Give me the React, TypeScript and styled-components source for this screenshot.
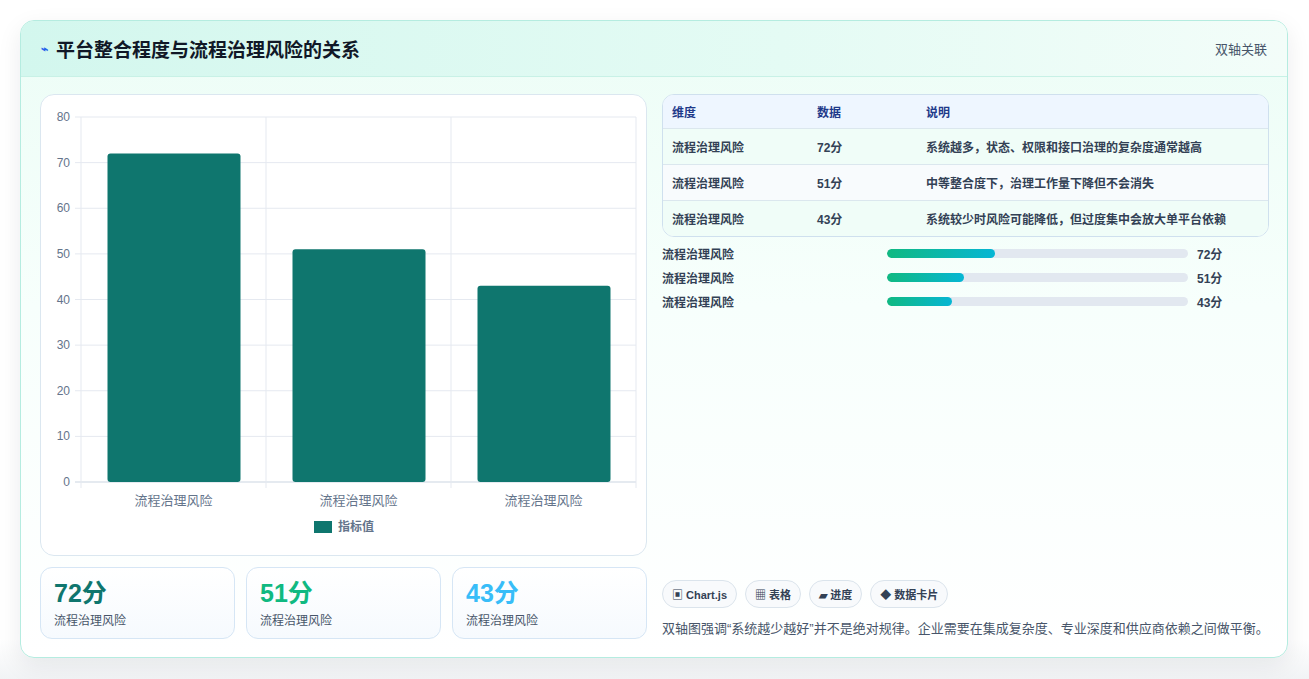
import React from 'react';
import styled, { createGlobalStyle } from 'styled-components';

const GlobalStyle = createGlobalStyle`
  body {
    margin: 0;
    background: #ffffff;
    font-family: "Liberation Sans", "Noto Sans CJK SC", sans-serif;
  }
`;

const Page = styled.div`
  padding: 20px 21px 22px 20px;
  background: linear-gradient(180deg, #ffffff 0%, #ffffff 94%, #f1f3f5 100%);
`;

const Card = styled.div`
  border: 1px solid #b5ece0;
  border-radius: 14px;
  overflow: hidden;
  box-shadow: 0 8px 24px rgba(15, 23, 42, 0.08);
  background: linear-gradient(180deg, #ecfdf6 0%, #f7fffc 45%, #ffffff 100%);
`;

const Header = styled.div`
  height: 55px;
  display: flex;
  align-items: center;
  justify-content: space-between;
  padding: 0 20px;
  background: linear-gradient(90deg, #d3f7ee 0%, #e4fbf4 60%, #f3fdf9 100%);
  border-bottom: 1px solid #c8f1e6;
`;

const Title = styled.h2`
  margin: 0;
  display: flex;
  align-items: center;
  gap: 8px;
  font-size: 19px;
  font-weight: 700;
  color: #111827;
`;

const Bolt = styled.span`
  color: #2563eb;
  font-size: 12px;
`;

const HeaderTag = styled.span`
  font-size: 13px;
  color: #475569;
`;

const Body = styled.div`
  display: grid;
  grid-template-columns: 607px 607px;
  gap: 15px;
  padding: 17px 19px 18px 19px;
`;

const LeftCol = styled.div`
  display: flex;
  flex-direction: column;
  gap: 11px;
`;

const ChartBox = styled.div`
  height: 460px;
  border: 1px solid #dbe7f0;
  border-radius: 14px;
  background: #ffffff;
`;

const Stats = styled.div`
  display: grid;
  grid-template-columns: repeat(3, 1fr);
  gap: 11px;
`;

const Stat = styled.div`
  height: 72px;
  box-sizing: border-box;
  border: 1px solid #d6e6f5;
  border-radius: 12px;
  padding: 10px 13px;
  background: linear-gradient(180deg, #ffffff 0%, #f6fafe 100%);
`;

const StatValue = styled.div<{ $color: string }>`
  font-size: 25px;
  font-weight: 700;
  color: ${({ $color }) => $color};
  line-height: 30px;
`;

const StatLabel = styled.div`
  font-size: 12px;
  color: #475569;
  margin-top: 3px;
`;

const RightCol = styled.div`
  display: flex;
  flex-direction: column;
`;

const Table = styled.div`
  border: 1px solid #cfe0ee;
  border-radius: 12px;
  overflow: hidden;
  background: #ffffff;
`;

const Row = styled.div<{ $head?: boolean; $alt?: boolean }>`
  display: grid;
  grid-template-columns: 145px 109px 1fr;
  align-items: center;
  height: ${({ $head }) => ($head ? '33px' : '35px')};
  padding-left: 9px;
  font-size: 12px;
  font-weight: 700;
  color: ${({ $head }) => ($head ? '#1e3a8a' : '#334155')};
  background: ${({ $head, $alt }) => ($head ? '#eef6ff' : $alt ? '#f8fbfd' : '#f0fdf8')};
  border-top: ${({ $head }) => ($head ? 'none' : '1px solid #dbe7ee')};
`;

const Progress = styled.div`
  margin-top: 8px;
  display: flex;
  flex-direction: column;
  gap: 7px;
`;

const PRow = styled.div`
  display: grid;
  grid-template-columns: 225px 310px 1fr;
  gap: 0;
  align-items: center;
  height: 17px;
  font-size: 12px;
  font-weight: 700;
  color: #334155;
`;

const Track = styled.div`
  height: 9px;
  border-radius: 5px;
  background: #e2e8f0;
  overflow: hidden;
  margin-right: 9px;
`;

const Fill = styled.div`
  height: 100%;
  border-radius: 5px;
  background: linear-gradient(90deg, #10b981, #06b6d4);
`;

const Spacer = styled.div`
  flex: 1;
`;

const Chips = styled.div`
  display: flex;
  gap: 8px;
`;

const Chip = styled.span`
  height: 28px;
  box-sizing: border-box;
  display: inline-flex;
  align-items: center;
  padding: 0 9px;
  border: 1px solid #dbe4ec;
  border-radius: 14px;
  background: #f8fafc;
  font-size: 11px;
  font-weight: 700;
  color: #334155;
`;

const Note = styled.p`
  margin: 10px 0 0;
  font-size: 13px;
  line-height: 21px;
  color: #475569;
`;

const data = [72, 51, 43];
const label = '流程治理风险';

const BarChart = () => {
  const x0 = 40, x1 = 595, y0 = 22, y1 = 387;
  const step = (y1 - y0) / 8;
  const cw = (x1 - x0) / 3;
  return (
    <svg width="607" height="460" viewBox="0 0 607 460">
      {Array.from({ length: 9 }).map((_, i) => {
        const y = y1 - i * step;
        return (
          <g key={i}>
            <line x1={x0 - 6} x2={x1} y1={y} y2={y} stroke={i === 0 ? '#cbd5e1' : '#e5e9f0'} />
            <text x={29} y={y + 4} textAnchor="end" fontSize="12" fill="#64748b">{i * 10}</text>
          </g>
        );
      })}
      {[0, 1, 2, 3].map((i) => (
        <line key={i} x1={x0 + i * cw} x2={x0 + i * cw} y1={y0} y2={y1 + 6} stroke="#e5e9f0" />
      ))}
      {data.map((v, i) => {
        const h = (v / 80) * (y1 - y0);
        return (
          <g key={i}>
            <rect x={x0 + i * cw + 26.5} y={y1 - h} width={133} height={h} rx={3} fill="#0f766e" />
            <text x={x0 + i * cw + cw / 2} y={410} textAnchor="middle" fontSize="13" fill="#64748b">{label}</text>
          </g>
        );
      })}
      <rect x={273} y={426} width={18} height={12} fill="#0f766e" />
      <text x={297} y={436} fontSize="12" fill="#64748b" fontWeight="700">指标值</text>
    </svg>
  );
};

const notes = [
  '系统越多，状态、权限和接口治理的复杂度通常越高',
  '中等整合度下，治理工作量下降但不会消失',
  '系统较少时风险可能降低，但过度集中会放大单平台依赖',
];
const colors = ['#0f766e', '#10b981', '#38bdf8'];

export default function App() {
  return (
    <Page>
      <GlobalStyle />
      <Card>
        <Header>
          <Title><Bolt>⌁</Bolt>平台整合程度与流程治理风险的关系</Title>
          <HeaderTag>双轴关联</HeaderTag>
        </Header>
        <Body>
          <LeftCol>
            <ChartBox><BarChart /></ChartBox>
            <Stats>
              {data.map((v, i) => (
                <Stat key={i}>
                  <StatValue $color={colors[i]}>{v}分</StatValue>
                  <StatLabel>{label}</StatLabel>
                </Stat>
              ))}
            </Stats>
          </LeftCol>
          <RightCol>
            <Table>
              <Row $head><span>维度</span><span>数据</span><span>说明</span></Row>
              {data.map((v, i) => (
                <Row key={i} $alt={i === 1}>
                  <span>{label}</span><span>{v}分</span><span>{notes[i]}</span>
                </Row>
              ))}
            </Table>
            <Progress>
              {data.map((v, i) => (
                <PRow key={i}>
                  <span>{label}</span>
                  <Track><Fill style={{ width: `${v / 2}%` }} /></Track>
                  <span>{v}分</span>
                </PRow>
              ))}
            </Progress>
            <Spacer />
            <Chips>
              <Chip>▣ Chart.js</Chip>
              <Chip>▦ 表格</Chip>
              <Chip>▰ 进度</Chip>
              <Chip>◆ 数据卡片</Chip>
            </Chips>
            <Note>双轴图强调“系统越少越好”并不是绝对规律。企业需要在集成复杂度、专业深度和供应商依赖之间做平衡。</Note>
          </RightCol>
        </Body>
      </Card>
    </Page>
  );
}
